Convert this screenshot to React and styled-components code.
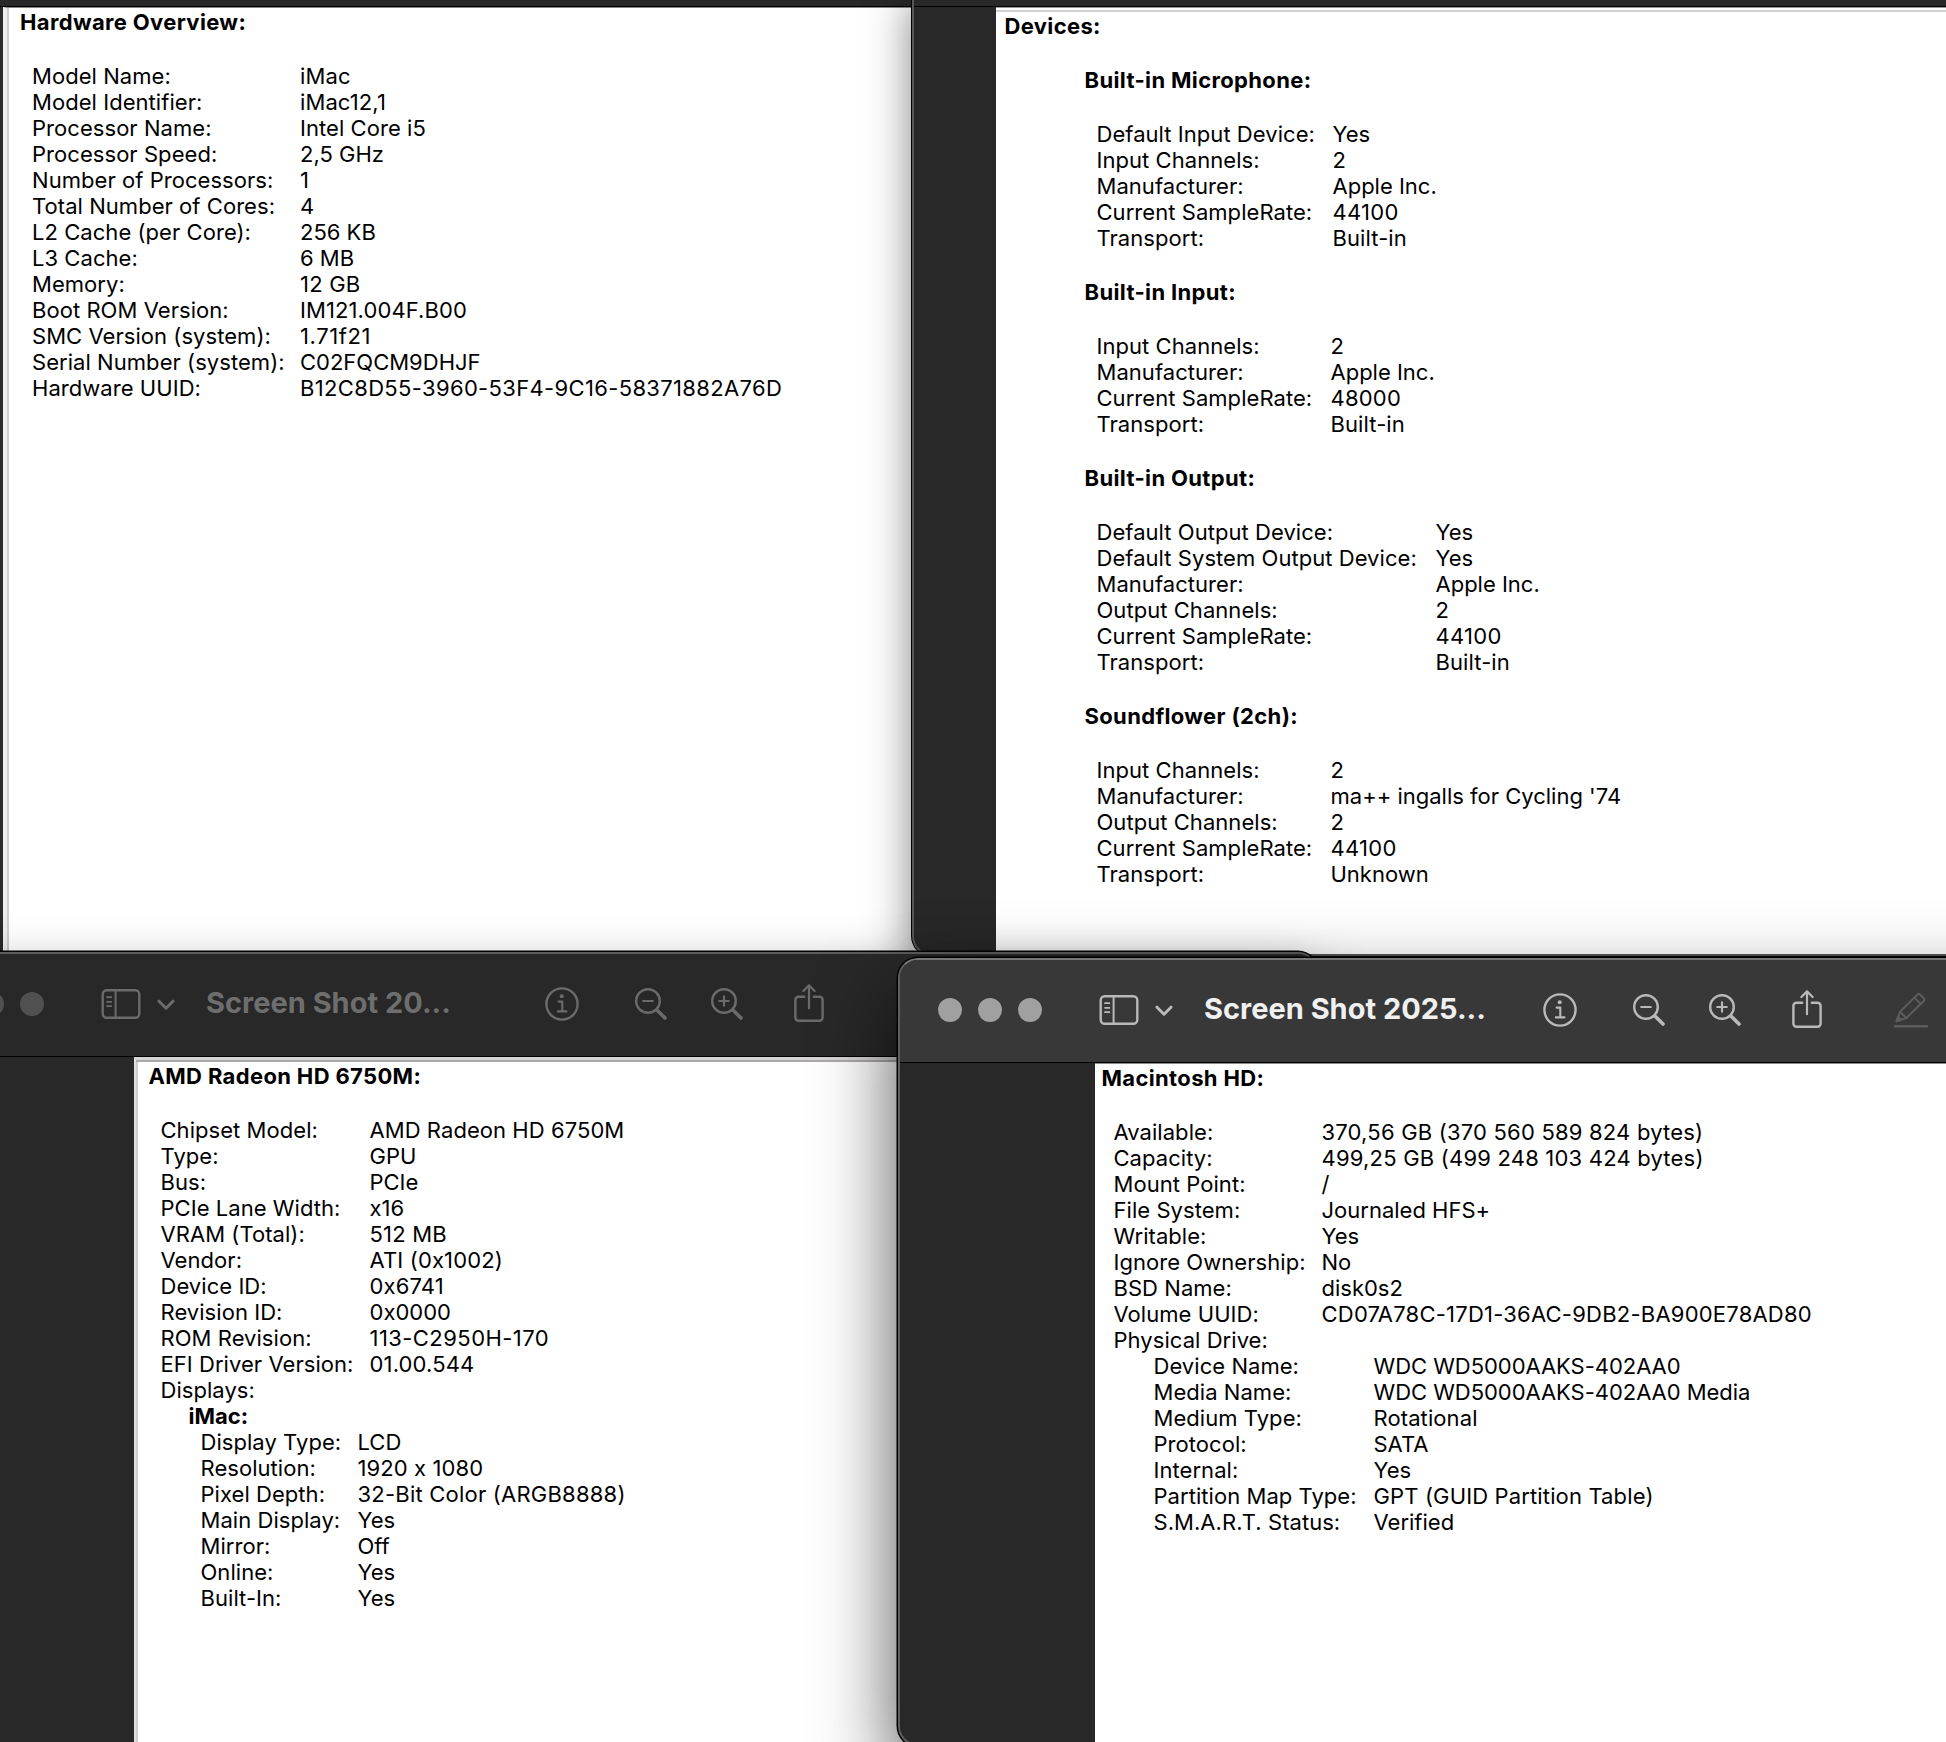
import React from 'react';
import styled, { createGlobalStyle, css } from 'styled-components';

// [label, value, tracking]
const hardware = [
  ['Model Name:', 'iMac', 0.15],
  ['Model Identifier:', 'iMac12,1', 0.1],
  ['Processor Name:', 'Intel Core i5', 0.06],
  ['Processor Speed:', '2,5 GHz'],
  ['Number of Processors:', '1'],
  ['Total Number of Cores:', '4'],
  ['L2 Cache (per Core):', '256 KB'],
  ['L3 Cache:', '6 MB'],
  ['Memory:', '12 GB', 0.2],
  ['Boot ROM Version:', 'IM121.004F.B00', 0.1],
  ['SMC Version (system):', '1.71f21', 0.6],
  ['Serial Number (system):', 'C02FQCM9DHJF'],
  ['Hardware UUID:', 'B12C8D55-3960-53F4-9C16-58371882A76D', 0.34],
];

const devices = [
  {
    name: 'Built-in Microphone:',
    labelWidth: 236,
    rows: [
      ['Default Input Device:', 'Yes'],
      ['Input Channels:', '2'],
      ['Manufacturer:', 'Apple Inc.'],
      ['Current SampleRate:', '44100', 0.3],
      ['Transport:', 'Built-in', 0.1],
    ],
  },
  {
    name: 'Built-in Input:',
    labelWidth: 234,
    rows: [
      ['Input Channels:', '2'],
      ['Manufacturer:', 'Apple Inc.'],
      ['Current SampleRate:', '48000', 0.2],
      ['Transport:', 'Built-in', 0.1],
    ],
  },
  {
    name: 'Built-in Output:',
    labelWidth: 339,
    rows: [
      ['Default Output Device:', 'Yes'],
      ['Default System Output Device:', 'Yes'],
      ['Manufacturer:', 'Apple Inc.'],
      ['Output Channels:', '2'],
      ['Current SampleRate:', '44100', 0.3],
      ['Transport:', 'Built-in', 0.1],
    ],
  },
  {
    name: 'Soundflower (2ch):',
    labelWidth: 234,
    rows: [
      ['Input Channels:', '2'],
      ['Manufacturer:', "ma++ ingalls for Cycling '74"],
      ['Output Channels:', '2'],
      ['Current SampleRate:', '44100', 0.3],
      ['Transport:', 'Unknown'],
    ],
  },
];

const graphics = [
  ['Chipset Model:', 'AMD Radeon HD 6750M', 0.06],
  ['Type:', 'GPU'],
  ['Bus:', 'PCIe'],
  ['PCIe Lane Width:', 'x16'],
  ['VRAM (Total):', '512 MB', 0.2],
  ['Vendor:', 'ATI (0x1002)', 0.15],
  ['Device ID:', '0x6741', 0.15],
  ['Revision ID:', '0x0000'],
  ['ROM Revision:', '113-C2950H-170', 0.44],
  ['EFI Driver Version:', '01.00.544', 0.15],
  ['Displays:', ''],
];

const display = [
  ['Display Type:', 'LCD'],
  ['Resolution:', '1920 x 1080', 0.1],
  ['Pixel Depth:', '32-Bit Color (ARGB8888)', 0.22],
  ['Main Display:', 'Yes'],
  ['Mirror:', 'Off'],
  ['Online:', 'Yes'],
  ['Built-In:', 'Yes'],
];

const volume = [
  ['Available:', '370,56 GB (370 560 589 824 bytes)', 0.2],
  ['Capacity:', '499,25 GB (499 248 103 424 bytes)', 0.2],
  ['Mount Point:', '/'],
  ['File System:', 'Journaled HFS+'],
  ['Writable:', 'Yes'],
  ['Ignore Ownership:', 'No'],
  ['BSD Name:', 'disk0s2'],
  ['Volume UUID:', 'CD07A78C-17D1-36AC-9DB2-BA900E78AD80', 0.22],
  ['Physical Drive:', ''],
];

const drive = [
  ['Device Name:', 'WDC WD5000AAKS-402AA0', -0.04],
  ['Media Name:', 'WDC WD5000AAKS-402AA0 Media', -0.04],
  ['Medium Type:', 'Rotational', 0.1],
  ['Protocol:', 'SATA'],
  ['Internal:', 'Yes'],
  ['Partition Map Type:', 'GPT (GUID Partition Table)', 0.14],
  ['S.M.A.R.T. Status:', 'Verified'],
];

function Properties({ rows, labelWidth, indent }) {
  return (
    <PropertyList $labelWidth={labelWidth} $indent={indent}>
      {rows.map(([label, value, tracking]) => (
        <React.Fragment key={label}>
          <dt>{label}</dt>
          <Value $tracking={tracking}>{value}</Value>
        </React.Fragment>
      ))}
    </PropertyList>
  );
}

function SidebarIcon() {
  return (
    <Icon width="40" height="32" viewBox="0 0 40 32">
      <rect x="1.7" y="2.2" width="36.6" height="27.6" rx="4" />
      <path d="M14.6 2.2V29.8" strokeWidth="2" />
      <path d="M6 9.2h4.4M6 13.8h4.4M6 18.2h4.4" strokeWidth="1.7" />
    </Icon>
  );
}

function InfoIcon() {
  return (
    <Icon width="36" height="36" viewBox="0 0 36 36">
      <circle cx="18" cy="18" r="15.6" />
      <circle cx="17.7" cy="10.3" r="2" className="solid" />
      <path d="M14.6 15.6h3.7v9.6M13.8 25.4h8.6" strokeWidth="2.1" />
    </Icon>
  );
}

function ZoomIcon({ plus }) {
  return (
    <Icon width="36" height="36" viewBox="0 0 36 36">
      <circle cx="15" cy="15" r="11.8" />
      <path d="M10.2 15h9.6" strokeWidth="2.1" />
      {plus && <path d="M15 10.2v9.6" strokeWidth="2.1" />}
      <path d="M24.4 24.4L32 32" strokeWidth="3.6" />
    </Icon>
  );
}

function ShareIcon() {
  return (
    <Icon width="32" height="40" viewBox="0 0 32 40">
      <path d="M11.2 12.8H5.4a3 3 0 0 0-3 3v18a3 3 0 0 0 3 3h21.2a3 3 0 0 0 3-3v-18a3 3 0 0 0-3-3h-5.8" />
      <path d="M16 24.2V1.8M10.4 7L16 1.4l5.6 5.6" strokeWidth="2.2" />
    </Icon>
  );
}

function MarkupIcon() {
  return (
    <Icon width="36" height="38" viewBox="0 0 36 38" $faded>
      <path d="M3.6 30.2l3.4-9.4L24.4 3.6a2 2 0 0 1 2.8 0l3.6 3.6a2 2 0 0 1 0 2.8L13.4 27z" strokeWidth="2" />
      <path d="M7 20.8l6.4 6.2M21.4 6.6l6.4 6.4M3.6 30.2l4.4-1.6-2.8-2.8z" strokeWidth="2" />
      <path d="M2 35.2h32" strokeWidth="2.4" />
    </Icon>
  );
}

function Toolbar({ title, active }) {
  return (
    <ToolbarStyled $active={active}>
      <Lights><i /><i /><i /></Lights>
      <SidebarIcon />
      <Chevron width="18" height="12" viewBox="0 0 18 12">
        <path d="M2 2.2l7 7 7-7" strokeWidth="3" />
      </Chevron>
      <Title>{title}</Title>
      <InfoIcon />
      <ZoomGroup>
        <ZoomIcon />
        <ZoomIcon plus />
      </ZoomGroup>
      <ShareIcon />
      <MarkupGroup>
        <MarkupIcon />
      </MarkupGroup>
    </ToolbarStyled>
  );
}

function App() {
  return (
    <Desktop>
      <GlobalStyle />
      <HardwareWindow>
        <TitleEdge />
        <Body $gutter={3}>
          <HardwarePage>
            <Heading>Hardware Overview:</Heading>
            <Properties rows={hardware} labelWidth={268} indent={12} />
          </HardwarePage>
        </Body>
      </HardwareWindow>

      <AudioWindow>
        <TitleEdge />
        <Body $gutter={82}>
          <AudioPage>
            <Heading>Devices:</Heading>
            <DeviceList>
              {devices.map((device) => (
                <section key={device.name}>
                  <Heading>{device.name}</Heading>
                  <Properties rows={device.rows} labelWidth={device.labelWidth} indent={12} />
                </section>
              ))}
            </DeviceList>
          </AudioPage>
        </Body>
      </AudioWindow>

      <GraphicsWindow>
        <Toolbar title="Screen Shot 20..." />
        <Body $gutter={232}>
          <GraphicsPage>
            <Heading>AMD Radeon HD 6750M:</Heading>
            <Properties rows={graphics} labelWidth={209} indent={12} />
            <SubHeading>iMac:</SubHeading>
            <Properties rows={display} labelWidth={157} indent={52} />
          </GraphicsPage>
        </Body>
      </GraphicsWindow>

      <StorageWindow>
        <Toolbar title="Screen Shot 2025..." active />
        <Body $gutter={195}>
          <StoragePage>
            <Heading>Macintosh HD:</Heading>
            <Properties rows={volume} labelWidth={208} indent={12} />
            <Properties rows={drive} labelWidth={220} indent={52} />
          </StoragePage>
        </Body>
      </StorageWindow>
    </Desktop>
  );
}

const GlobalStyle = createGlobalStyle`
  * {
    box-sizing: border-box;
  }
  body {
    margin: 0;
    overflow: hidden;
    background: #282828;
    font-family: Inter, 'Liberation Sans', sans-serif;
    font-feature-settings: 'calt' 0;
  }
`;

const Desktop = styled.div`
  position: relative;
  width: 1946px;
  height: 1742px;
  overflow: hidden;
`;

const windowBase = css`
  position: absolute;
  display: flex;
  flex-direction: column;
  overflow: hidden;
  background: #282828;
`;

const HardwareWindow = styled.div`
  ${windowBase}
  left: 0;
  top: 0;
  width: 1100px;
  height: 1000px;
`;

const AudioWindow = styled.div`
  ${windowBase}
  left: 912px;
  top: -20px;
  width: 1100px;
  height: 976px;
  padding-top: 20px;
  border: solid #575757;
  border-width: 0 0 2px 2px;
  border-radius: 0 0 0 20px;
  box-shadow: 0 0 0 1px #000, 0 20px 44px rgba(0, 0, 0, 0.5);
`;

const GraphicsWindow = styled.div`
  ${windowBase}
  left: -100px;
  top: 952px;
  width: 1418px;
  height: 900px;
  border: 2px solid #5c5c5c;
  border-radius: 20px;
  box-shadow: 0 0 0 1.5px #000, 0 22px 50px rgba(0, 0, 0, 0.5);
`;

const StorageWindow = styled.div`
  ${windowBase}
  left: 898px;
  top: 958px;
  width: 1418px;
  height: 788px;
  border: 2px solid #5e5e5e;
  border-top-color: #777;
  border-radius: 20px;
  box-shadow: 0 0 0 1.5px #000, 0 36px 80px rgba(0, 0, 0, 0.7);
`;

const TitleEdge = styled.div`
  flex: none;
  height: 7px;
  background: #282828;
  border-bottom: 1px solid #000;
`;

const Body = styled.div`
  flex: 1;
  display: flex;
  padding-left: ${(props) => props.$gutter}px;
`;

const Page = styled.div`
  flex: 1;
  background: #fff;
  color: #000;
  font-size: 22px;
  line-height: 26px;
  white-space: nowrap;
`;

const HardwarePage = styled(Page)`
  border-top: 1px solid #888;
  border-left: 4px solid #ececec;
  box-shadow: inset 2px 0 #cbcbcb;
  padding: 1px 0 0 13px;
`;

const AudioPage = styled(Page)`
  border-top: 1px solid #999;
  background: linear-gradient(#fff 2px, #d2d2d2 2px, #d2d2d2 4px, #fff 4px);
  padding: 5px 0 0 8.5px;
`;

const GraphicsPage = styled(Page)`
  border-top: 3px solid #d6d4d5;
  border-left: 2px solid #dedede;
  box-shadow: inset 0 2px #aca9ab, inset 2px 0 #cdcdcd;
  padding: 3px 0 0 12.5px;
`;

const StoragePage = styled(Page)`
  border-top: 1px solid #8c8c8c;
  padding: 1px 0 0 6.5px;
`;

const Heading = styled.h2`
  margin: 0 0 28px;
  font-size: 22px;
  line-height: 26px;
  font-weight: 700;
  letter-spacing: 0.35px;
`;

const SubHeading = styled(Heading)`
  margin: 0 0 0 40px;
  letter-spacing: 0;
`;

const PropertyList = styled.dl`
  display: grid;
  grid-template-columns: ${(props) => props.$labelWidth}px auto;
  grid-auto-rows: 26px;
  margin: 0;
  padding-left: ${(props) => props.$indent}px;
  dt {
    letter-spacing: 0.05px;
  }
`;

const Value = styled.dd`
  margin: 0;
  letter-spacing: ${(props) => props.$tracking || 0}px;
`;

const DeviceList = styled.div`
  display: flex;
  flex-direction: column;
  gap: 28px;
  padding-left: 80px;
`;

const ToolbarStyled = styled.div`
  flex: none;
  display: flex;
  align-items: center;
  height: 103px;
  padding: 0 0 3px 38px;
  color: ${(props) => (props.$active ? '#b9b9b9' : '#6b6b6b')};
  background: ${(props) => (props.$active ? '#383838' : '#282828')};
  border-bottom: 1px solid #000;
  --title: ${(props) => (props.$active ? '#f0f0f0' : '#6e6e6e')};
  --light: ${(props) => (props.$active ? '#a0a0a0' : '#505050')};
  --faded: ${(props) => (props.$active ? '#5c5c5c' : '#3c3c3c')};
`;

const Lights = styled.div`
  display: flex;
  gap: 16px;
  margin-right: 57px;
  i {
    width: 24px;
    height: 24px;
    border-radius: 50%;
    background: var(--light);
  }
`;

const Icon = styled.svg`
  flex: none;
  fill: none;
  stroke: ${(props) => (props.$faded ? 'var(--faded)' : 'currentColor')};
  stroke-width: 2.4;
  stroke-linecap: round;
  stroke-linejoin: round;
  .solid {
    fill: currentColor;
    stroke: none;
  }
`;

const Chevron = styled(Icon)`
  margin: 2px 31px 0 16px;
`;

const Title = styled.div`
  width: 338px;
  padding-bottom: 2px;
  font-size: 29px;
  font-weight: 700;
  color: var(--title);
  white-space: nowrap;
`;

const ZoomGroup = styled.div`
  display: flex;
  gap: 40px;
  margin: 0 48px 0 53px;
`;

const MarkupGroup = styled.div`
  display: flex;
  margin-left: 70px;
`;

export default App;
